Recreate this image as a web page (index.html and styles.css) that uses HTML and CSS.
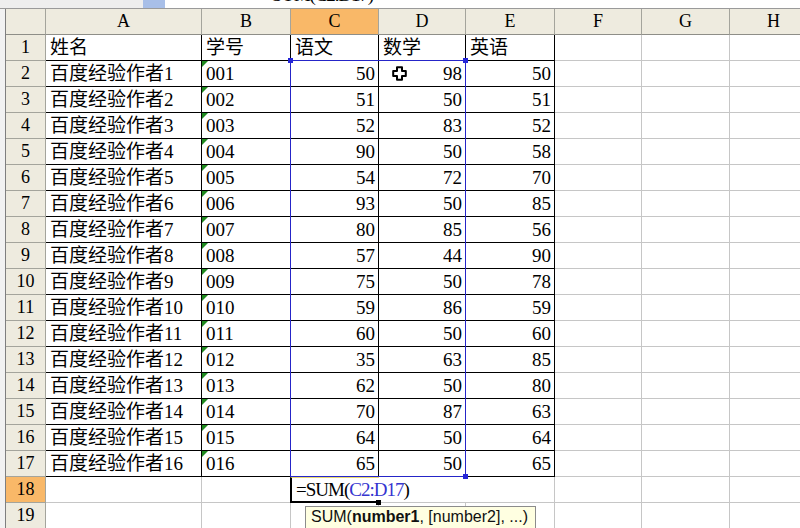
FILE: index.html
```html
<!DOCTYPE html>
<html lang="zh-CN">
<head>
<meta charset="UTF-8">
<link rel="stylesheet" href="styles.css">
</head>
<body>
<div class="screen">
  <div class="formula_bar">
    <div class="fb_left"></div>
    <div class="fb_button"></div>
    <div class="fb_text"><span>SUM(C2:D17)</span></div>
  </div>

  <div class="sheet">
    <div class="left_strip"></div>
    <table class="grid">
      <colgroup>
        <col class="w_row"><col class="w_a"><col class="w_b"><col class="w_c"><col class="w_d">
        <col class="w_e"><col class="w_f"><col class="w_g"><col class="w_h">
      </colgroup>
      <thead>
        <tr>
          <th class="corner"></th><th>A</th><th>B</th><th class="on">C</th><th>D</th><th>E</th><th>F</th><th>G</th><th>H</th>
        </tr>
      </thead>
      <tbody class="data">
        <tr class="titles"><th>1</th><td>姓名</td><td>学号</td><td>语文</td><td>数学</td><td>英语</td><td></td><td></td><td></td></tr>
        <tr><th>2</th><td>百度经验作者1</td><td>001</td><td>50</td><td>98</td><td>50</td><td></td><td></td><td></td></tr>
        <tr><th>3</th><td>百度经验作者2</td><td>002</td><td>51</td><td>50</td><td>51</td><td></td><td></td><td></td></tr>
        <tr><th>4</th><td>百度经验作者3</td><td>003</td><td>52</td><td>83</td><td>52</td><td></td><td></td><td></td></tr>
        <tr><th>5</th><td>百度经验作者4</td><td>004</td><td>90</td><td>50</td><td>58</td><td></td><td></td><td></td></tr>
        <tr><th>6</th><td>百度经验作者5</td><td>005</td><td>54</td><td>72</td><td>70</td><td></td><td></td><td></td></tr>
        <tr><th>7</th><td>百度经验作者6</td><td>006</td><td>93</td><td>50</td><td>85</td><td></td><td></td><td></td></tr>
        <tr><th>8</th><td>百度经验作者7</td><td>007</td><td>80</td><td>85</td><td>56</td><td></td><td></td><td></td></tr>
        <tr><th>9</th><td>百度经验作者8</td><td>008</td><td>57</td><td>44</td><td>90</td><td></td><td></td><td></td></tr>
        <tr><th>10</th><td>百度经验作者9</td><td>009</td><td>75</td><td>50</td><td>78</td><td></td><td></td><td></td></tr>
        <tr><th>11</th><td>百度经验作者10</td><td>010</td><td>59</td><td>86</td><td>59</td><td></td><td></td><td></td></tr>
        <tr><th>12</th><td>百度经验作者11</td><td>011</td><td>60</td><td>50</td><td>60</td><td></td><td></td><td></td></tr>
        <tr><th>13</th><td>百度经验作者12</td><td>012</td><td>35</td><td>63</td><td>85</td><td></td><td></td><td></td></tr>
        <tr><th>14</th><td>百度经验作者13</td><td>013</td><td>62</td><td>50</td><td>80</td><td></td><td></td><td></td></tr>
        <tr><th>15</th><td>百度经验作者14</td><td>014</td><td>70</td><td>87</td><td>63</td><td></td><td></td><td></td></tr>
        <tr><th>16</th><td>百度经验作者15</td><td>015</td><td>64</td><td>50</td><td>64</td><td></td><td></td><td></td></tr>
        <tr><th>17</th><td>百度经验作者16</td><td>016</td><td>65</td><td>50</td><td>65</td><td></td><td></td><td></td></tr>
      </tbody>
      <tbody>
        <tr><th class="on">18</th><td></td><td></td><td colspan="2" class="edit">=SUM(<span class="ref">C2:D17</span>)</td><td></td><td></td><td></td><td></td></tr>
        <tr><th>19</th><td></td><td></td><td></td><td></td><td></td><td></td><td></td><td></td></tr>
      </tbody>
    </table>
  </div>

  <!-- range C2:D17 being referenced by the formula -->
  <div class="ref_range">
    <span class="knob knob_tl"></span>
    <span class="knob knob_tr"></span>
    <span class="knob knob_br"></span>
  </div>

  <!-- active cell C18 -->
  <div class="active_cell"><span class="fill_handle"></span></div>

  <svg class="cursor" width="15" height="15" viewBox="0 0 15 15">
    <path d="M5 1.2 H10 V5 H13.8 V10 H10 V13.8 H5 V10 H1.2 V5 H5 Z" fill="#fff" stroke="#000" stroke-width="2" stroke-linejoin="round"/>
  </svg>

  <div class="tooltip">SUM(<b>number1</b>, [number2], ...)</div>
</div>
</body>
</html>
```

FILE: styles.css
```css
html, body {
  margin: 0;
  padding: 0;
  background: #fff;
  overflow: hidden;
}

.screen {
  position: relative;
  width: 800px;
  height: 528px;
  overflow: hidden;
}

/* strip of the formula bar left over at the top */
.formula_bar {
  display: flex;
  height: 8px;
  border-bottom: 1px solid #9a9a9a;
  overflow: hidden;
}

.fb_left {
  width: 143px;
  background: #eeeeee;
}

.fb_button {
  width: 22px;
  background: #a8bfe8;
}

.fb_text {
  flex: 1;
  background: #fff;
  padding-left: 107px;
  font-family: "Liberation Serif", serif;
  font-size: 19px;
  letter-spacing: -1.2px;
  line-height: 20px;
}

.fb_text span {
  display: block;
  margin-top: -15px;
}

.sheet {
  display: flex;
}

.left_strip {
  width: 5px;
  flex: none;
  background: #f2f2f2;
  border-right: 1px solid #7f7f7f;
}

.grid {
  flex: none;
  table-layout: fixed;
  border-collapse: separate;
  border-spacing: 0;
  width: 812px;
  font-family: "Liberation Serif", "Noto Sans CJK SC", serif;
  font-size: 19px;
  color: #000;
}

.w_row { width: 40px; }
.w_a { width: 156px; }
.w_b { width: 89px; }
.w_c { width: 88px; }
.w_d { width: 87px; }
.w_e { width: 89px; }
.w_f { width: 87px; }
.w_g { width: 88px; }
.w_h { width: 88px; }

.grid th, .grid td {
  box-sizing: border-box;
  height: 26px;
  padding: 0 4px;
  line-height: 25px;
  white-space: nowrap;
  overflow: hidden;
}

.grid th {
  background: #eeebdf;
  font-weight: normal;
  font-size: 18px;
  text-align: center;
  border-right: 1px solid #a4a49c;
  border-bottom: 1px solid #a4a49c;
  padding: 0;
}

.grid thead th {
  height: 26px;
  border-bottom: 1px solid #8e8e88;
}

.grid th.on {
  background: #f9b868;
}

.grid td {
  border-right: 1px solid #c6c6c6;
  border-bottom: 1px solid #c6c6c6;
  text-align: left;
}

.data td:nth-of-type(-n+5) {
  border-right-color: #000;
  border-bottom-color: #000;
}

.data tr:not(.titles) td:nth-of-type(n+3) {
  text-align: right;
  padding-right: 3px;
}

/* little green "number stored as text" marks */
.data tr:not(.titles) td:nth-of-type(2) {
  position: relative;
}

.data tr:not(.titles) td:nth-of-type(2)::before {
  content: "";
  position: absolute;
  left: 0;
  top: 0;
  border-top: 6px solid #1f8a1f;
  border-right: 6px solid transparent;
}

.grid td.edit {
  background: #fff;
  border-right: none;
  overflow: visible;
  padding-left: 5px;
  letter-spacing: -1px;
}

.ref {
  color: #3535d0;
}

.ref_range {
  position: absolute;
  left: 290px;
  top: 60px;
  width: 176px;
  height: 417px;
  box-sizing: border-box;
  border: 1px solid #2525c8;
}

.knob {
  position: absolute;
  width: 5px;
  height: 5px;
  background: #2525d8;
}

.knob_tl { left: -3px; top: -3px; }
.knob_tr { right: -3px; top: -3px; }
.knob_br { right: -3px; bottom: -3px; }

.active_cell {
  position: absolute;
  left: 290px;
  top: 477px;
  width: 89px;
  height: 26px;
  box-sizing: border-box;
  border-left: 2px solid #000;
  border-bottom: 2px solid #000;
  border-top: 1px solid #e8d870;
}

.fill_handle {
  position: absolute;
  right: -2px;
  bottom: -4px;
  width: 5px;
  height: 5px;
  background: #000;
}

.cursor {
  position: absolute;
  left: 392px;
  top: 66px;
}

.tooltip {
  position: absolute;
  left: 305px;
  top: 506px;
  width: 231px;
  height: 30px;
  box-sizing: border-box;
  background: #ffffe1;
  border: 1px solid #8c8c8c;
  padding: 1px 0 0 5px;
  font-family: "Liberation Sans", Arial, sans-serif;
  font-size: 16px;
  line-height: 18px;
  color: #111;
  white-space: nowrap;
}
```
